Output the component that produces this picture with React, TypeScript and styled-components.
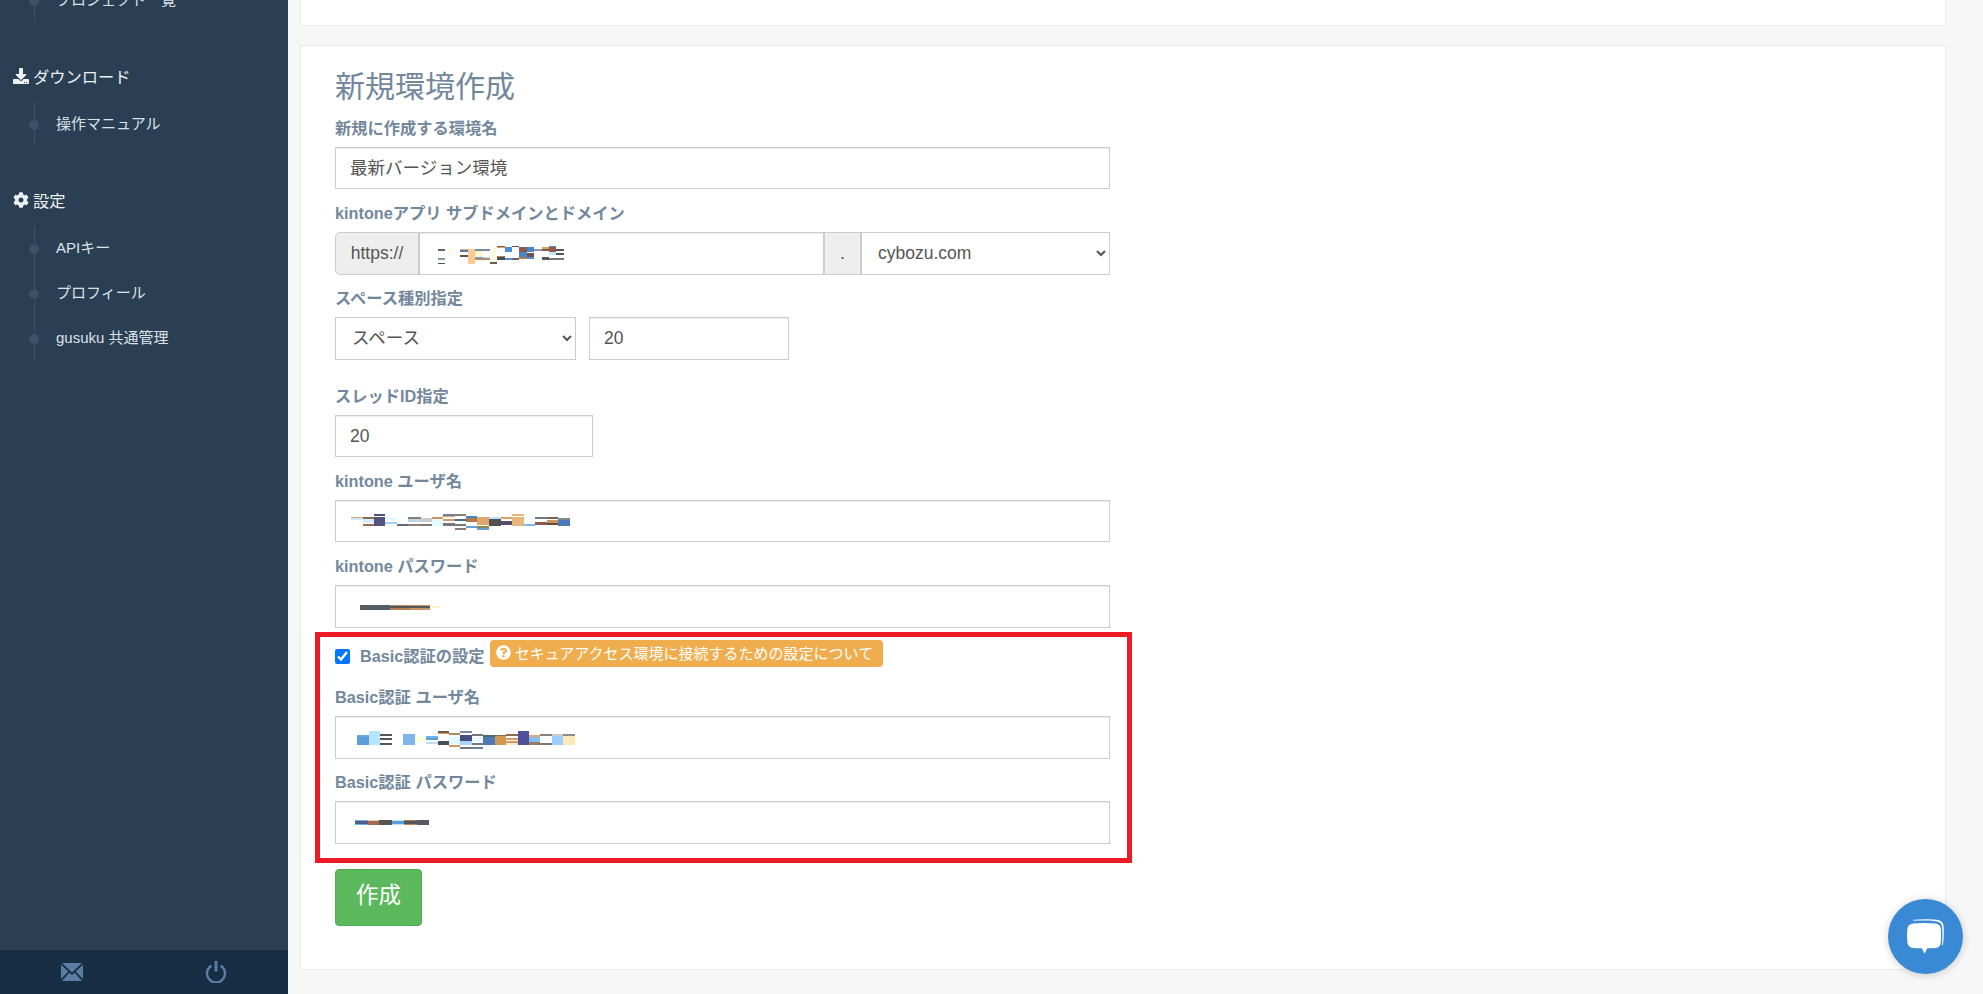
import React from 'react';
import styled, { createGlobalStyle } from 'styled-components';
import { FaDownload, FaCog, FaQuestionCircle } from 'react-icons/fa';

const GlobalStyle = createGlobalStyle`
  html, body {
    margin: 0;
    height: 100%;
    overflow: hidden;
    background: #f7f7f7;
    font-family: "Liberation Sans", "Noto Sans CJK JP", sans-serif;
  }
  * { box-sizing: border-box; }
`;

const Layout = styled.div`
  display: flex;
  height: 994px;
  overflow: hidden;
`;

const Sidebar = styled.aside`
  width: 288px;
  flex: none;
  display: flex;
  flex-direction: column;
  background: #2a3f54;
  overflow: hidden;
`;

const SideMenu = styled.nav`
  flex: 1;
  margin-top: -23px;
`;

const SideHeader = styled.div`
  display: flex;
  align-items: center;
  gap: 4px;
  height: 24px;
  margin: 42px 0 1px;
  padding-left: 13px;
  font-size: 16.25px;
  color: #ecf0f1;
`;

const SubList = styled.ul`
  list-style: none;
  margin: 13px 0 0 34px;
  padding: 0;
  border-left: 1px solid #3d5166;
  &:first-child { margin-top: 0; }
`;

const SubItem = styled.li`
  position: relative;
  height: 45px;
  padding-left: 21px;
  line-height: 46px;
  font-size: 15px;
  color: #dbe2e8;
  white-space: nowrap;
  &::before {
    content: '';
    position: absolute;
    left: -6px;
    top: 19px;
    width: 10px;
    height: 10px;
    border-radius: 50%;
    background: #3d5166;
  }
`;

const SideFooter = styled.div`
  display: grid;
  grid-template-columns: 1fr 1fr;
  height: 44px;
  background: #172d44;
`;

const FooterButton = styled.div`
  display: flex;
  align-items: center;
  justify-content: center;
  color: #5a7da3;
`;

const Main = styled.main`
  flex: 1;
  display: flex;
  flex-direction: column;
  gap: 19px;
  padding: 0 37px 0 12px;
`;

const TopPanel = styled.section`
  height: 26px;
  background: #fff;
  border: 1px solid #e6e9ed;
  border-top: none;
`;

const Panel = styled.section`
  background: #fff;
  border: 1px solid #e6e9ed;
  padding: 23px 0 43px 34px;
`;

const Title = styled.h2`
  margin: 0 0 13px;
  height: 36px;
  line-height: 36px;
  font-size: 30px;
  font-weight: 400;
  color: #73879c;
`;

const Form = styled.form`
  width: 775px;
`;

const Label = styled.label<{ $gap?: number }>`
  display: block;
  height: 20px;
  line-height: 20px;
  margin: ${p => p.$gap ?? 14}px 0 9px;
  font-size: 16.25px;
  font-weight: 700;
  color: #73879c;
  &:first-child { margin-top: 0; }
`;

const FieldWrap = styled.div<{ $width?: number }>`
  position: relative;
  width: ${p => (p.$width ? `${p.$width}px` : '100%')};
`;

const Input = styled.input<{ $height?: number; $lift?: number }>`
  display: block;
  width: 100%;
  height: ${p => p.$height ?? 42}px;
  padding: 0 14px ${p => p.$lift ?? 0}px;
  border: 1px solid #ccc;
  border-radius: 0;
  outline: none;
  background: #fff;
  box-shadow: inset 0 1px 1px rgba(0, 0, 0, 0.075);
  font: inherit;
  font-size: 17.5px;
  color: #555;
`;

const Select = styled.select<{ $width: number }>`
  flex: none;
  width: ${p => p.$width}px;
  height: 100%;
  padding: 0 12px 1px;
  border: 1px solid #ccc;
  border-radius: 0;
  background: #fff;
  font: inherit;
  font-size: 17.5px;
  color: #555;
`;

const InputGroup = styled.div`
  display: flex;
  height: 43px;
`;

const Addon = styled.span<{ $width: number; $round?: boolean }>`
  flex: none;
  display: flex;
  align-items: center;
  justify-content: center;
  width: ${p => p.$width}px;
  background: #eee;
  border: 1px solid #ccc;
  border-radius: ${p => (p.$round ? '5px 0 0 5px' : '0')};
  font-size: 17.5px;
  color: #555;
`;

const SpaceRow = styled.div`
  display: flex;
  gap: 13px;
  height: 43px;
`;

const Masked = styled.svg<{ $left: number; $top: number }>`
  position: absolute;
  left: ${p => p.$left}px;
  top: ${p => p.$top}px;
  shape-rendering: crispEdges;
`;

const BasicBox = styled.div`
  width: 817px;
  margin: 4px 0 6px -20px;
  padding: 3px 17px 14px 15px;
  border: 5px solid #ed1c24;
`;

const CheckRow = styled.div`
  display: flex;
  align-items: center;
  height: 27px;
  margin-bottom: 20px;
`;

const Check = styled.input`
  width: 15px;
  height: 15px;
  margin: 5px 10px 0 0;
`;

const CheckLabel = styled.span`
  margin: 3px 5px 0 0;
  font-size: 16.25px;
  font-weight: 700;
  color: #73879c;
`;

const Badge = styled.span`
  display: flex;
  align-items: center;
  gap: 4px;
  width: 393px;
  height: 27px;
  padding: 0 0 3px 6px;
  border-radius: 4px;
  background: #f0ad4e;
  font-size: 15px;
  color: #fff;
  white-space: nowrap;
`;

const SubmitButton = styled.button`
  display: block;
  width: 87px;
  height: 57px;
  padding: 0 0 9px;
  border: 1px solid #4cae4c;
  border-radius: 4px;
  background: #5cb85c;
  font: inherit;
  font-size: 22.5px;
  color: #fff;
`;

const ChatButton = styled.div`
  position: fixed;
  right: 20px;
  bottom: 20px;
  width: 75px;
  height: 75px;
  display: flex;
  align-items: center;
  justify-content: center;
  border-radius: 50%;
  background: #3a89d5;
  box-shadow: 0 1px 8px rgba(0, 0, 0, 0.2);
`;

type Block = [number, number, number, number, string];

// x, y, w, h measured at 3x on the reference
const subdomainBlocks: Block[] = [
  [39, 28, 21, 5, '#5a6a70'], [39, 55, 21, 5, '#7fa0a8'], [39, 68, 21, 4, '#555'],
  [60, 28, 24, 5, '#fffde0'],
  [105, 27, 24, 4, '#e0a878'], [105, 31, 24, 4, '#5a7ab0'], [105, 45, 24, 5, '#555'],
  [129, 27, 21, 45, '#fccb91'],
  [150, 27, 45, 6, '#7a8aa0'], [150, 33, 24, 17, '#fff6d0'], [150, 50, 24, 5, '#6aa0d8'], [150, 55, 45, 5, '#b08a70'], [174, 50, 21, 5, '#bfe4ff'],
  [195, 20, 21, 47, '#fffbe6'], [195, 67, 21, 5, '#6a6050'],
  [216, 18, 24, 3, '#7a5a40'], [216, 21, 24, 4, '#e0a060'], [216, 48, 24, 4, '#c08050'], [216, 52, 24, 8, '#4a5058'],
  [240, 22, 20, 13, '#4a90d9'], [240, 55, 20, 5, '#5a90d0'],
  [260, 18, 22, 4, '#555'], [260, 55, 22, 5, '#666'],
  [282, 22, 23, 13, '#8a5a50'], [282, 35, 23, 17, '#4a85c8'], [282, 52, 23, 6, '#b07a50'],
  [305, 22, 22, 13, '#4a85c8'], [305, 38, 22, 14, '#70504f'], [305, 52, 22, 5, '#4a90d9'],
  [327, 28, 23, 5, '#8a9aa8'],
  [350, 22, 22, 6, '#d9a060'], [350, 28, 22, 5, '#7a5a50'], [350, 52, 22, 8, '#555'],
  [372, 18, 22, 4, '#4a90d9'], [372, 22, 22, 13, '#9a5a4a'], [372, 35, 22, 10, '#bfe8ff'], [372, 55, 22, 5, '#777'],
  [394, 28, 22, 5, '#555'], [394, 40, 22, 6, '#555'], [394, 55, 22, 5, '#777'],
];

const userBlocks: Block[] = [
  [18, 36, 36, 4, '#d9a878'], [18, 40, 36, 5, '#cfe8ff'],
  [54, 36, 33, 6, '#8a6a50'], [54, 42, 33, 13, '#d4f0ff'], [54, 56, 33, 6, '#a06a50'],
  [87, 27, 33, 6, '#50507a'], [87, 36, 33, 27, '#55547f'],
  [120, 40, 36, 5, '#e2fbff'], [120, 50, 36, 7, '#9fd0ff'],
  [156, 57, 33, 5, '#667'],
  [189, 36, 39, 6, '#8a8078'], [189, 42, 39, 8, '#b8d8f0'], [189, 57, 39, 5, '#8a8078'],
  [228, 38, 33, 12, '#ccc'], [228, 57, 33, 5, '#777'],
  [261, 36, 33, 6, '#c89860'], [261, 42, 33, 21, '#e2fbff'],
  [294, 27, 36, 6, '#6a80a0'], [294, 33, 36, 3, '#e0a060'], [294, 42, 36, 6, '#d09a60'], [294, 55, 36, 7, '#777'],
  [330, 27, 33, 6, '#8a8078'], [330, 42, 33, 6, '#4a6a90'], [330, 58, 33, 4, '#777'], [330, 68, 33, 7, '#8a7a70'],
  [363, 33, 33, 7, '#4a85c8'], [363, 40, 33, 12, '#b07a50'], [363, 62, 33, 8, '#6aa0d8'],
  [396, 36, 36, 24, '#e0a868'], [396, 62, 36, 8, '#8a8a50'], [396, 70, 36, 5, '#6aa0d8'],
  [432, 36, 36, 6, '#bfe0ff'], [432, 42, 36, 21, '#505050'],
  [468, 36, 33, 6, '#d9a060'], [468, 48, 33, 12, '#5a4a70'],
  [501, 27, 36, 6, '#e8b678'], [501, 36, 36, 27, '#e8b678'],
  [537, 57, 33, 6, '#7fb8ee'],
  [570, 36, 36, 6, '#6a7a90'], [570, 52, 36, 8, '#8a5a50'],
  [606, 36, 33, 6, '#8a5a50'], [606, 44, 33, 10, '#c89860'], [606, 54, 33, 6, '#70483a'],
  [639, 39, 36, 5, '#7a8a90'], [639, 44, 36, 19, '#4e79b8'],
];

const passBlocks: Block[] = [
  [30, 30, 90, 14, '#545c68'],
  [120, 30, 60, 4, '#b98a60'], [120, 34, 60, 5, '#555'], [120, 39, 60, 5, '#b08050'],
  [180, 30, 60, 4, '#c99060'], [180, 34, 60, 5, '#555a60'], [180, 39, 60, 5, '#c99565'],
  [240, 33, 30, 6, '#fff2c0'],
];

const basicUserBlocks: Block[] = [
  [21, 30, 36, 6, '#6aa9e0'], [21, 36, 36, 24, '#5a9dd8'],
  [57, 18, 33, 42, '#b5e5ff'],
  [90, 27, 36, 6, '#555'], [90, 39, 36, 6, '#555'], [90, 54, 36, 6, '#555'],
  [159, 27, 36, 33, '#7cb6ea'],
  [195, 36, 33, 15, '#fbffd8'],
  [228, 33, 36, 6, '#6fb0e0'], [228, 39, 36, 7, '#5aa0d8'], [228, 52, 36, 4, '#bbddee'],
  [264, 18, 33, 6, '#6a5a50'], [264, 24, 33, 4, '#e0a060'], [264, 48, 33, 12, '#4a5058'],
  [297, 24, 33, 6, '#b08a60'], [297, 36, 33, 21, '#e0fbff'], [297, 60, 33, 6, '#d09a60'],
  [330, 18, 36, 6, '#7a8aa0'], [330, 30, 36, 18, '#444f80'], [330, 48, 36, 12, '#a8d4f8'], [330, 66, 36, 6, '#777'],
  [366, 27, 33, 6, '#777'], [366, 36, 33, 15, '#e8f8ff'], [366, 55, 33, 5, '#777'], [366, 66, 33, 6, '#6a8098'],
  [399, 30, 36, 6, '#4a6a70'], [399, 36, 36, 24, '#4e79b8'],
  [435, 30, 33, 3, '#8a6a50'], [435, 33, 33, 27, '#d09a55'],
  [468, 27, 36, 6, '#8a6a50'], [468, 39, 36, 6, '#d09a60'], [468, 48, 36, 6, '#d09a60'], [468, 54, 36, 6, '#f0e8c8'],
  [504, 18, 33, 42, '#50509a'],
  [537, 30, 33, 6, '#e0a878'], [537, 36, 33, 15, '#80bff5'], [537, 51, 33, 9, '#9a7a60'],
  [570, 27, 36, 6, '#8a8078'], [570, 54, 36, 6, '#777'],
  [606, 27, 33, 6, '#c8d0c8'], [606, 33, 33, 27, '#9ccfff'],
  [639, 27, 36, 6, '#8a8a88'], [639, 33, 36, 27, '#ffe8b8'],
];

const basicPassBlocks: Block[] = [
  [15, 30, 39, 4, '#70b0e8'], [15, 34, 39, 8, '#50608a'], [15, 42, 39, 3, '#70b0e8'],
  [54, 30, 33, 4, '#f0c898'], [54, 34, 33, 11, '#a56a55'],
  [87, 30, 39, 15, '#555'],
  [126, 30, 36, 4, '#bfe4ff'], [126, 34, 36, 8, '#5aa0d8'], [126, 42, 36, 3, '#bfe4ff'],
  [162, 30, 39, 4, '#b07a50'], [162, 34, 39, 8, '#555'], [162, 42, 39, 3, '#c08a5a'],
  [201, 30, 36, 15, '#555a64'],
];

const MaskedText = ({ blocks, w, h, left, top }: { blocks: Block[]; w: number; h: number; left: number; top: number }) => (
  <Masked $left={left} $top={top} width={w} height={h} viewBox={`0 0 ${w * 3} ${h * 3}`}>
    {blocks.map(([x, y, bw, bh, fill], i) => (
      <rect key={i} x={x} y={y} width={bw} height={bh} fill={fill} />
    ))}
  </Masked>
);

const MailIcon = () => (
  <svg width="22" height="18" viewBox="0 0 22 18" fill="currentColor">
    <path d="M1 0h20L11 9.500z" />
    <path d="M0 1.500v14.500l7.200-7.600z" />
    <path d="M22 1.500v14.500l-7.200-7.600z" />
    <path d="M8.400 9.600 11 12l2.600-2.400L21 18H1z" />
  </svg>
);

const PowerIcon = () => (
  <svg width="22" height="22" viewBox="0 0 22 22" fill="none" stroke="currentColor" strokeWidth="2.4">
    <path d="M6.500 4.600a9 9 0 1 0 9 0" />
    <path d="M11 0v10.500" strokeWidth="3" />
  </svg>
);

const ChatIcon = () => (
  <svg width="39" height="36" viewBox="0 0 42 38" fill="#fff">
    <path d="M8 0.500c8-0.900 18-0.900 25 0 4 0.500 7 2.500 7.400 6.500 0.500 6 0.500 13-0.600 20-0.300 1.500-1 1.500-1 0 0.500-7 0.500-14 0-19-0.400-4-3-5.500-7-6-7-0.800-16-0.800-24-0.500z" />
    <path d="M8 4.500c7-0.800 16-0.800 24 0 3 0.300 5 2 5.400 5 0.500 5 0.500 11 0 16-0.300 3-2.400 5-5.400 5.300-3 0.200-6 0.300-9 0.300L20 37l-3-5.900c-3 0-6-0.100-9-0.300-3.500-0.300-6-2.300-6.400-5.300-0.600-5-0.600-11 0-16C2 6.500 4.500 4.800 8 4.500z" />
  </svg>
);

export default function App() {
  return (
    <Layout>
      <GlobalStyle />
      <Sidebar>
        <SideMenu>
          <SubList>
            <SubItem>プロジェクト一覧</SubItem>
          </SubList>
          <SideHeader><FaDownload size={16} />ダウンロード</SideHeader>
          <SubList>
            <SubItem>操作マニュアル</SubItem>
          </SubList>
          <SideHeader><FaCog size={16} />設定</SideHeader>
          <SubList>
            <SubItem>APIキー</SubItem>
            <SubItem>プロフィール</SubItem>
            <SubItem>gusuku 共通管理</SubItem>
          </SubList>
        </SideMenu>
        <SideFooter>
          <FooterButton><MailIcon /></FooterButton>
          <FooterButton><PowerIcon /></FooterButton>
        </SideFooter>
      </Sidebar>

      <Main>
        <TopPanel />
        <Panel>
          <Title>新規環境作成</Title>
          <Form>
            <Label>新規に作成する環境名</Label>
            <Input $lift={3} readOnly value="最新バージョン環境" />

            <Label>kintoneアプリ サブドメインとドメイン</Label>
            <InputGroup>
              <Addon $width={84} $round>https://</Addon>
              <FieldWrap $width={405}>
                <Input $height={43} readOnly value="" />
                <MaskedText blocks={subdomainBlocks} w={150} h={30} left={6} top={8} />
              </FieldWrap>
              <Addon $width={37}>.</Addon>
              <Select $width={249} defaultValue="cybozu.com">
                <option>cybozu.com</option>
              </Select>
            </InputGroup>

            <Label $gap={13}>スペース種別指定</Label>
            <SpaceRow>
              <Select $width={241} defaultValue="スペース">
                <option>スペース</option>
              </Select>
              <FieldWrap $width={200}>
                <Input $height={43} readOnly value="20" />
              </FieldWrap>
            </SpaceRow>

            <Label $gap={26}>スレッドID指定</Label>
            <FieldWrap $width={258}>
              <Input readOnly value="20" />
            </FieldWrap>

            <Label>kintone ユーザ名</Label>
            <FieldWrap>
              <Input readOnly value="" />
              <MaskedText blocks={userBlocks} w={230} h={30} left={10} top={5} />
            </FieldWrap>

            <Label>kintone パスワード</Label>
            <FieldWrap>
              <Input $height={43} readOnly value="" />
              <MaskedText blocks={passBlocks} w={100} h={25} left={15} top={10} />
            </FieldWrap>

            <BasicBox>
              <CheckRow>
                <Check type="checkbox" defaultChecked />
                <CheckLabel>Basic認証の設定</CheckLabel>
                <Badge><FaQuestionCircle size={15} />セキュアアクセス環境に接続するための設定について</Badge>
              </CheckRow>

              <Label>Basic認証 ユーザ名</Label>
              <FieldWrap>
                <Input $height={43} readOnly value="" />
                <MaskedText blocks={basicUserBlocks} w={230} h={30} left={15} top={9} />
              </FieldWrap>

              <Label $gap={13}>Basic認証 パスワード</Label>
              <FieldWrap>
                <Input $height={43} readOnly value="" />
                <MaskedText blocks={basicPassBlocks} w={100} h={25} left={15} top={9} />
              </FieldWrap>
            </BasicBox>

            <SubmitButton type="button">作成</SubmitButton>
          </Form>
        </Panel>
      </Main>

      <ChatButton><ChatIcon /></ChatButton>
    </Layout>
  );
}
